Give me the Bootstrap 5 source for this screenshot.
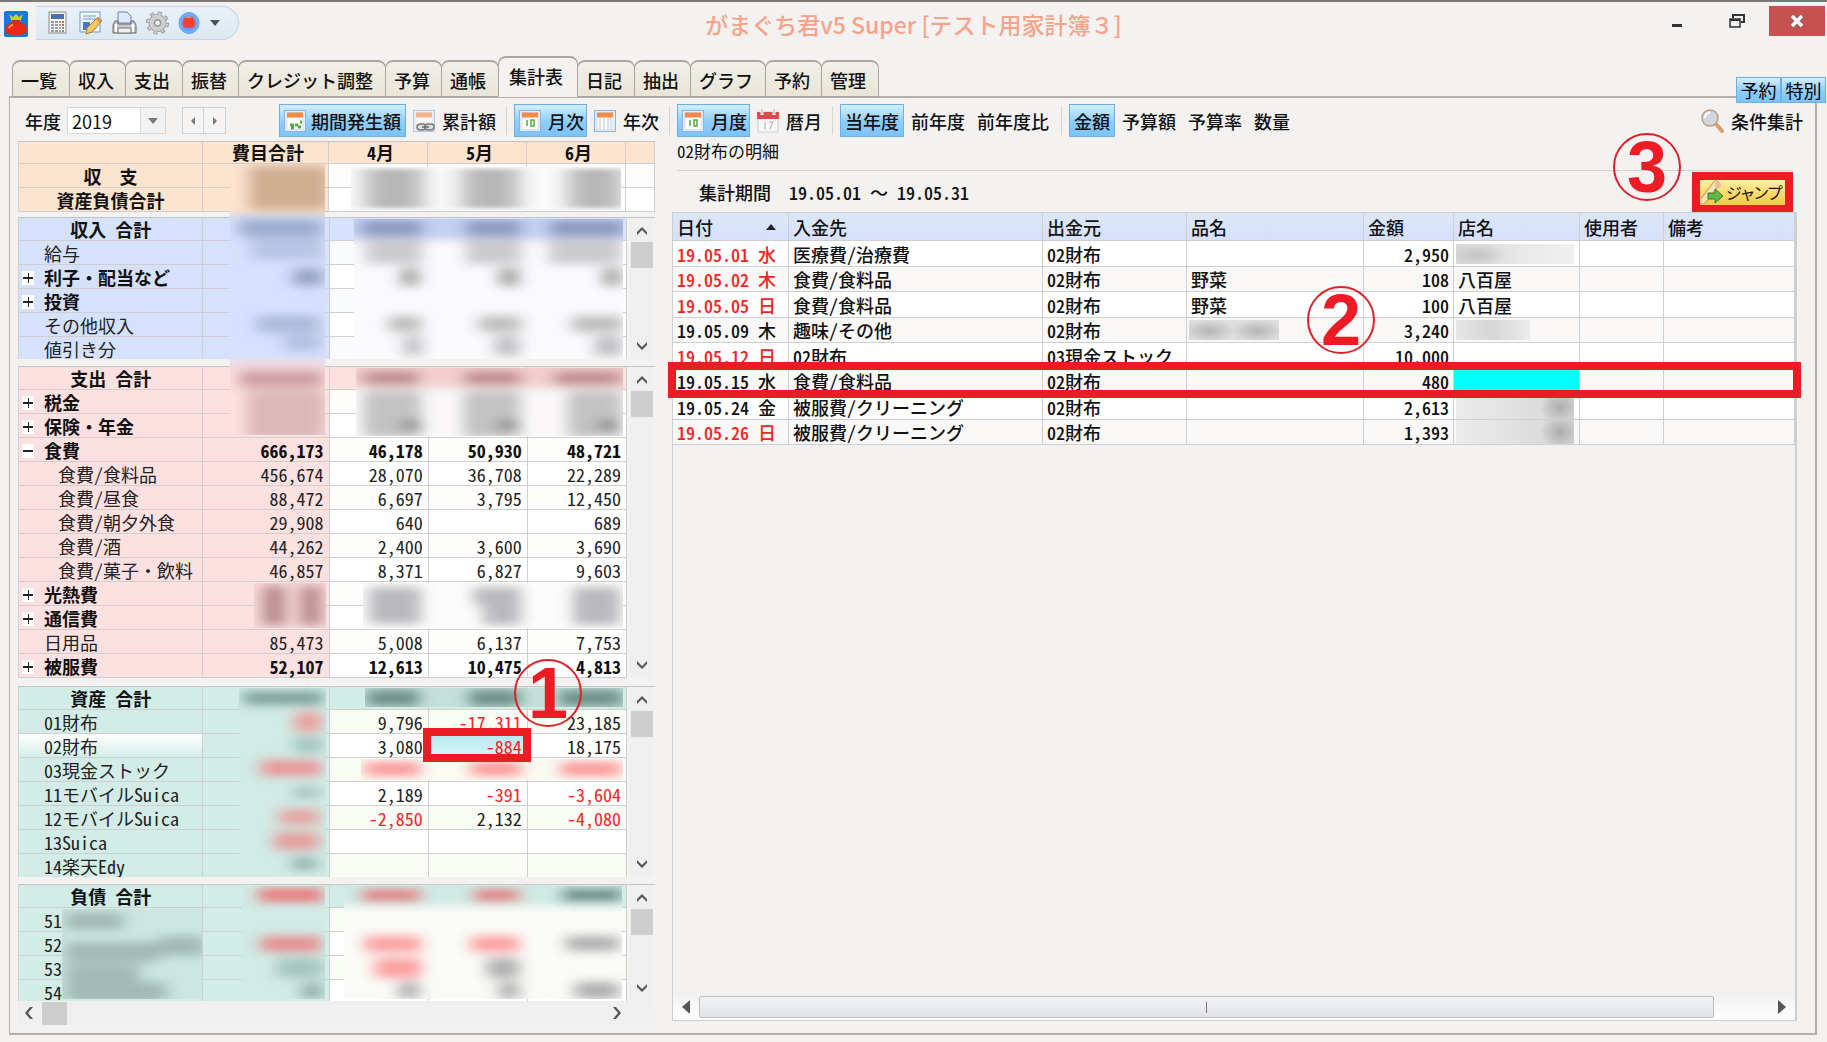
<!DOCTYPE html>
<html lang="ja">
<head>
<meta charset="utf-8">
<meta name="viewport" content="width=device-width, initial-scale=1">
<title>がまぐち君v5 Super</title>
<link rel="stylesheet" href="https://cdn.jsdelivr.net/npm/bootstrap@5.3.0/dist/css/bootstrap.min.css">
<style>
body{font-family:"Noto Sans CJK JP",sans-serif;font-size:18px;line-height:24px;color:#111;background:#f3f2f1;font-feature-settings:"hwid" 1}
.app{border-top:2px solid #7c7878}
/* title bar */
.titlebar{display:grid;grid-template-columns:1fr auto 1fr;height:54px}
.titlebar h1{font-size:23px;line-height:44px;color:#f7a389;margin:0;font-weight:500;font-feature-settings:normal;white-space:pre}
.quick{height:34px;background:linear-gradient(#eaf1f8,#dce8f2);border:1px solid #c3d4e6;border-left:0;border-radius:0 17px 17px 0;padding:0 18px 0 10px;gap:8px}
.plain{border:0;background:none;padding:0;line-height:0}
.winbtn{width:56px;height:30px}
.winclose{background:#c75050;margin-right:2px}
/* tabs */
.maintabs{height:41px;padding-left:12px;margin-bottom:-1px;border:0;position:relative;z-index:1}
.maintabs .nav-link{height:37px;padding:0 12px 0 8px;line-height:36px;color:#111;font-weight:500;border:2px solid #aaa6a1;border-radius:8px 8px 0 0;background:linear-gradient(#f1efe9,#e9e5d7);margin:0 -1px 0 0;border-width:2px 1px 1px}
.maintabs li:nth-child(even) .nav-link{padding-right:11px}
.maintabs .nav-link.active{height:41px;padding:0 14px 0 10px!important;background:#f3f2f1;border-color:#aaa6a1;border-bottom-color:#f3f2f1;color:#111}
.sheet{border:2px solid #b1afad;border-width:2px 2px 2px 1px;margin:0 10px 7px 9px;padding:6px 18px 8px 8px}
.overtabs{position:absolute;right:1px;top:75px;z-index:2}
.overtabs button,.tool.on{background:linear-gradient(#d3effe,#8ccdfb 55%,#7cc2fb);border:1px solid #6fb0e4}
.overtabs button{width:45px;height:26px;padding:0;line-height:24px}
/* tool row */
.tools{height:33px;gap:2px;margin-left:7px;margin-right:-9px}
.tool{height:33px;border:1px solid transparent;background:none;padding:0 4px;display:flex;align-items:center;gap:5px;font-weight:500;white-space:nowrap;color:#111}
.tool.ic{gap:7px;padding-right:2px}
.vsep{width:1px;height:29px;background:#d6d5d3;margin:0 5px}
.yearbox{width:99px;height:27px;position:relative;margin:0 14px 0 4px}
.yearbox select{width:100%;height:27px;appearance:none;border:1px solid #d8d8d8;background:#fff;padding:0 4px;line-height:24px;border-radius:0;color:#111}
.yearbox span{position:absolute;right:1px;top:1px;width:25px;height:25px;background:#f2f2f2;border-left:1px solid #d8d8d8;pointer-events:none;line-height:0;padding:10px 7px}
.stepper{margin-right:51px}
.stepper button{width:22px;height:27px;border:1px solid #d0d0d0;background:#f5f4f3;padding:0;line-height:0}
.stepper button+button{border-left:0}
/* left sheets */
.ledger{flex:0 0 636px;position:relative;margin-top:4px}
.block{display:flex;overflow:hidden;border-top:1px solid #c4c4c4;border-left:1px solid #d0d0d0}
.grid{border-collapse:separate;border-spacing:0;table-layout:fixed;width:608px;flex:none}
.grid th,.grid td{height:24px;line-height:22px;padding:0 5px 0 0;border-right:1px solid #cfcfcf;border-bottom:1px solid #cfcfcf;white-space:nowrap;text-align:right;font-weight:400;background:#fff;color:#222}
.grid tr:first-child>*{height:23px}
.grid tr:nth-child(even) td{background:var(--band)}
.grid tr>th,.grid tr>td:nth-child(2),.grid tr:first-child>*{background:var(--hue)!important}
.grid th[scope=row]{text-align:left;padding-left:25px}
.grid th.kid{padding-left:39px}
.grid th.fold{padding-left:3px}
.grid th.sum{text-align:center;padding-left:0;padding-right:0;white-space:pre}
.grid .strong>*{font-weight:700;color:#111}
.grid th.picked{background:linear-gradient(#fff,#d3eee8)!important}
.grid td.here{background:linear-gradient(#b4e8ef,#d8f5f7)!important}
.grid .neg,.book .hol{color:#f5231f}
.fold button{width:12px;height:14px;border:0;padding:0;margin-right:10px;line-height:0;background:linear-gradient(#222,#222) 50% 50%/10px 2px no-repeat,linear-gradient(#222,#222) 50% 50%/1px 10px no-repeat,#fff;vertical-align:0}
.fold button.open{background:linear-gradient(#222,#222) 50% 50%/10px 2px no-repeat,#fff}
.orange{--hue:#fde4cf;--band:#fefdfb;height:71px;margin-bottom:5px}
.orange .grid{width:636px}
.orange .grid tr:first-child>*{height:22px;line-height:21px;padding-left:5px;padding-right:0}
.blue{--hue:#d6e1fd;--band:#fafbff;height:142px;margin-bottom:7px}
.pink{--hue:#fde0e0;--band:#fffdfc;height:312px;margin-bottom:8px}
.green{--hue:#d2ede7;--band:#f8fcf5}
.assets{height:191px;margin-bottom:7px}
.debts{flex:1 1 115px;min-height:115px;height:0}
.vbar{width:23px;margin-left:3px;background:#f0efef;flex:none;display:flex;flex-direction:column;align-items:center}
.vbar svg{margin:8px 0 6px}
.vbar i{width:22px;height:26px;background:#cdcdcd}
.vbar svg:last-child{margin-top:auto;margin-bottom:8px}
.hbar{height:24px;background:#f0efef;padding:0 34px 0 7px;display:flex;align-items:center}
.hbar i{width:25px;height:23px;background:#cdcdcd;margin-left:8px}
.smudges{position:absolute;left:0;top:0;pointer-events:none}
/* right pane */
.detail{flex:1 1 0;min-width:0;margin-left:17px;margin-bottom:4px;position:relative}
.detail h2{font-size:17px;line-height:18px;margin:5px 0 10px 5px;font-weight:400}
.period{height:42px;border-top:1px solid #d3d2d1;margin:0 4px 0 5px;padding:1px 0 0 22px;font-weight:500;white-space:pre}
.wide{font-feature-settings:normal}
.jump{height:25px;width:85px;border:0;padding:0 0 0 1px;background:linear-gradient(#fbf0a4,#fbd765 60%,#fcc650);font-size:16px;font-feature-settings:"palt" 1;line-height:25px;white-space:nowrap;gap:2px;box-shadow:0 0 0 8px #eb1c24;margin-right:8px;color:#111}
.bookwrap{border:1px solid #d0cfcf;border-right-width:2px;position:relative}
.book{border-collapse:separate;border-spacing:0;table-layout:fixed;width:100%;font-weight:500}
.book th,.book td{height:25px;line-height:24px;padding:0 4px 0 4px;border-right:1px solid #cfcfcf;border-bottom:1px solid #cfcfcf;white-space:pre;background:#fff;font-weight:500;color:#111}
.book tr:nth-child(odd) td{height:26px}
.book tr:nth-child(even) td{background:#f9f8f7}
.book thead th{height:28px;background:linear-gradient(#dbe7f7,#d7e0fb)}
.book .amt{text-align:right}
.book td.pick{background:#0ff!important}
.book td.redact{padding:0 2px}
.redact i{display:block;height:20px;width:118px;background:radial-gradient(ellipse 30px 12px at 22px 11px,#c4c4c4,transparent),linear-gradient(90deg,#d8d8d8,#e9e9e9 60%,#f0f0f0)}
.redact i.half{width:74px;background:linear-gradient(90deg,#e6e6e6,#d6d6d6 50%,#ececec)}
.redact i.ware{width:90px;background:radial-gradient(ellipse 26px 12px at 20px 11px,#b5b5b5,transparent),radial-gradient(ellipse 26px 12px at 68px 11px,#b5b5b5,transparent),#dedede}
.redact i.late{height:24px;background:radial-gradient(ellipse 20px 18px at 104px 12px,#adadad,transparent),linear-gradient(90deg,#ebebeb,#d6d6d6)}
.slider{height:27px;background:linear-gradient(#f0f0f0,#fff);padding:0 9px;gap:9px}
.slider b{flex:0 1 1015px;height:22px;border:1px solid #b9bdbf;border-radius:2px;background:linear-gradient(#f1f3f3,#e3e4ea)}
.slider b::after{content:"";display:block;width:1px;height:11px;margin:5px auto;background:#777}
/* callouts */
.frame{position:absolute;border:8px solid #eb1c24;pointer-events:none;z-index:3}
.ring{position:absolute;width:68px;height:68px;border:2px solid #dc2128;border-radius:50%;color:#ed1c24;font:700 72px/64px "Liberation Sans",sans-serif;text-align:center;z-index:4;pointer-events:none}
.frame-cell{left:405px;top:587px;width:108px;height:34px}
.ring-one{left:496px;top:518px}
.frame-row{left:-5px;right:-6px;top:149px;height:36px}
.ring-two{right:420px;top:73px}
.ring-three{right:116px;top:-4px}
</style>
<script src="https://cdn.jsdelivr.net/npm/bootstrap@5.3.0/dist/js/bootstrap.bundle.min.js"></script>
</head>
<body>
<svg width="0" height="0" class="position-absolute" aria-hidden="true"><defs>
<symbol id="up" viewBox="0 0 14 10"><path d="M2 9V6l5-5 5 5v3L7 4z" fill="#555"/></symbol>
<symbol id="down" viewBox="0 0 14 10"><path d="M2 1v3l5 5 5-5V1L7 6z" fill="#555"/></symbol>
<symbol id="cal" viewBox="0 0 22 22"><rect x=".5" y=".5" width="21" height="21" fill="#e4eefa" stroke="#8fb2da"/><rect x="3" y="2.500" width="16" height="17" fill="#fff" stroke="#c5d4e6" stroke-width=".6"/><rect x="3" y="2.500" width="16" height="5" fill="#f58a48"/></symbol>
</defs></svg>
<div class="app d-flex flex-column min-vh-100 position-relative">
<header class="titlebar">
  <div class="d-flex align-items-start">
    <svg class="mx-1" style="margin-top:9px" width="24" height="26" viewBox="0 0 24 26"><rect width="24" height="26" rx="2" fill="#1679e0"/><path d="M5 3l4 3 3-3 3 3 4-3-3 8H8z" fill="#c9d32b"/><path d="M8 9h8l-1 2c5 1 8 4 8 8 0 3-3 5-11 5S1 22 1 19c0-4 3-7 8-8z" fill="#e82a12"/><path d="M5 17c1-2 2-3 4-3" stroke="#ff8d6c" stroke-width="2" fill="none"/><path d="M8 10h8" stroke="#a32" stroke-width="1.500"/></svg>
    <div class="quick d-flex align-items-center ms-1 mt-1">
      <button class="plain" aria-label="電卓"><svg width="24" height="24" viewBox="0 0 24 24"><rect x="3" y="1" width="17" height="21" fill="#f4f4f2" stroke="#8b8c8c"/><rect x="5" y="3" width="13" height="5" fill="#4c70b4"/><path d="M5 11h3m1 0h3m1 0h2M5 14h3m1 0h3m1 0h2M5 17h3m1 0h3m1 0h2M5 20h3m1 0h3m1 0h2" stroke="#9a9da3" stroke-width="2"/><path d="M16 11h2m-2 3h2" stroke="#d6604a" stroke-width="2"/><path d="M16 17h2m-2 3h2" stroke="#888" stroke-width="2"/></svg></button>
      <button class="plain" aria-label="メモ"><svg width="26" height="24" viewBox="0 0 26 24"><rect x="2" y="1" width="20" height="20" fill="#f2f7fd" stroke="#6e9bd1"/><path d="M5 5h13M5 8h13" stroke="#96b9e0" stroke-width="1.500"/><path d="M5 11h7v8H5z" fill="#467db9"/><path d="M20 6l4 4-10 11-6 2 1-6z" fill="#f8c763" stroke="#a97d36"/><path d="M20 6l4 4-2 2-4-4z" fill="#d9925e"/></svg></button>
      <button class="plain" aria-label="印刷"><svg width="25" height="24" viewBox="0 0 25 24"><path d="M6 12V1h9l4 4v7z" fill="#dceafd" stroke="#6584b4"/><path d="M3 10h3v3h13v-3h3l2 4v8H1v-8z" fill="#c9c9c9" stroke="#686868"/><path d="M4 13v8m17-8v8" stroke="#fff" stroke-width="2"/><path d="M6 17h13v5H6z" fill="#f0f0f0" stroke="#777"/></svg></button>
      <button class="plain" aria-label="設定"><svg width="25" height="24" viewBox="0 0 24 24"><g fill="none" stroke="#8e8e8e"><circle cx="12" cy="12" r="9.500" stroke-width="4" stroke-dasharray="3.700 3.760"/><circle cx="12" cy="12" r="6" stroke-width="6"/><circle cx="12" cy="12" r="6" stroke="#cfcfcf" stroke-width="4.500"/><circle cx="12" cy="12" r="9.500" stroke="#cfcfcf" stroke-width="2.500" stroke-dasharray="2.500 4.960" stroke-dashoffset="-.6"/></g><circle cx="12" cy="12" r="3" fill="#eef2f5" stroke="#888"/></svg></button>
      <button class="plain" aria-label="がまぐち"><svg width="24" height="24" viewBox="0 0 24 24"><defs><radialGradient id="ball"><stop offset=".5" stop-color="#5da6f8"/><stop offset="1" stop-color="#78b8fb"/></radialGradient></defs><ellipse cx="11" cy="12" rx="10" ry="10.500" fill="url(#ball)" stroke="#5aa0f0"/><ellipse cx="11" cy="12" rx="8" ry="8" fill="#7997ef"/><path d="M8 6h6c4 3 4 10 0 11H8C3 16 4 9 8 6z" fill="#f4402f"/><path d="M8 7l3-2 3 2z" fill="#ee9a33"/></svg></button>
      <button class="plain" aria-label="その他"><svg width="10" height="7"><path d="M0 0h10L5 6z" fill="#49525f"/></svg></button>
    </div>
  </div>
  <h1>がまぐち君v5 Super [テスト用家計簿３]</h1>
  <div class="d-flex justify-content-end align-items-start pt-1">
    <button class="plain winbtn" aria-label="最小化"><svg width="12" height="20"><path d="M1 13h10v3H1z" fill="#333"/></svg></button>
    <button class="plain winbtn mx-1" aria-label="元に戻す"><svg width="16" height="16" fill="none" stroke="#333"><path d="M4 5V2h11v7h-3" stroke-width="2"/><path d="M1 6h10v8H1z" stroke-width="1.500"/><path d="M1 7h10" stroke-width="2"/></svg></button>
    <button class="plain winbtn winclose" aria-label="閉じる"><svg width="16" height="14"><path d="M3 2l10 10M13 2L3 12" stroke="#8d6f72" stroke-width="5.500"/><path d="M3 2l10 10M13 2L3 12" stroke="#fff" stroke-width="3.200"/></svg></button>
  </div>
</header>
<ul class="nav nav-tabs maintabs flex-nowrap align-items-end">
  <li class="nav-item"><a class="nav-link" href="#">一覧</a></li><li class="nav-item"><a class="nav-link" href="#">収入</a></li><li class="nav-item"><a class="nav-link" href="#">支出</a></li><li class="nav-item"><a class="nav-link" href="#">振替</a></li><li class="nav-item"><a class="nav-link" href="#">クレジット調整</a></li><li class="nav-item"><a class="nav-link" href="#">予算</a></li><li class="nav-item"><a class="nav-link" href="#">通帳</a></li><li class="nav-item"><a class="nav-link active" aria-current="page" href="#">集計表</a></li><li class="nav-item"><a class="nav-link" href="#">日記</a></li><li class="nav-item"><a class="nav-link" href="#">抽出</a></li><li class="nav-item"><a class="nav-link" href="#">グラフ</a></li><li class="nav-item"><a class="nav-link" href="#">予約</a></li><li class="nav-item"><a class="nav-link" href="#">管理</a></li>
</ul>
<div class="overtabs d-flex"><button>予約</button><button>特別</button></div>
<main class="sheet flex-grow-1 d-flex flex-column">
  <div class="tools d-flex align-items-center">
    <label for="year" class="fw-medium">年度</label>
    <div class="yearbox"><select id="year"><option>2019</option></select><span><svg width="10" height="6"><path d="M0 0h10L5 6z" fill="#777"/></svg></span></div>
    <div class="stepper d-flex"><button aria-label="前年"><svg width="6" height="8"><path d="M5 0v8L1 4z" fill="#777"/></svg></button><button aria-label="翌年"><svg width="6" height="8"><path d="M1 0v8l4-4z" fill="#777"/></svg></button></div>
    <button class="tool on"><svg width="22" height="22"><use href="#cal"/><path d="M6 15h4m1 0h3m2-3h2M7 18h3m4-1h3" stroke="#53a552" stroke-width="3"/></svg>期間発生額</button>
    <button class="tool ic"><svg width="22" height="22" viewBox="0 0 22 22"><g opacity=".6"><use href="#cal"/></g><rect x="4" y="14" width="9" height="6" rx="3" fill="#ddd" stroke="#777" stroke-width="1.500"/><rect x="12" y="14" width="9" height="6" rx="3" fill="#ddd" stroke="#777" stroke-width="1.500"/><path d="M9 17h7" stroke="#666" stroke-width="1.500"/></svg>累計額</button>
    <span class="vsep"></span>
    <button class="tool on ic"><svg width="22" height="22"><use href="#cal"/><path d="M8 10v6M12 10h3v6h-3z" stroke="#58a83f" stroke-width="1.500" fill="none"/></svg>月次</button>
    <button class="tool ic"><svg width="22" height="22"><use href="#cal"/><path d="M6 8v11m4-11v11m4-11v11m3-11v11" stroke="#a9c3e2"/></svg>年次</button>
    <span class="vsep"></span>
    <button class="tool on ic"><svg width="22" height="22"><use href="#cal"/><path d="M8 10v6M12 10h3v6h-3z" stroke="#58a83f" stroke-width="1.500" fill="none"/></svg>月度</button>
    <button class="tool ic"><svg width="22" height="24" viewBox="0 0 22 24"><rect x="1" y="3" width="20" height="20" rx="1" fill="#f7f7f7" stroke="#ccc"/><path d="M0 3h22v7H0z" fill="#dc4b4b"/><path d="M5 0v6m12-6v6" stroke="#fff" stroke-width="3"/><path d="M5 0v5m12-5v5" stroke="#999"/><path d="M8 13v7m4-7h4l-3 7" fill="none" stroke="#aaa"/></svg>暦月</button>
    <span class="vsep"></span>
    <button class="tool on">当年度</button><button class="tool">前年度</button><button class="tool">前年度比</button>
    <span class="vsep"></span>
    <button class="tool on">金額</button><button class="tool">予算額</button><button class="tool">予算率</button><button class="tool">数量</button>
    <button class="tool ic ms-auto"><svg width="24" height="24" viewBox="0 0 24 24"><path d="M16 15l6 7" stroke="#d4a273" stroke-width="4" stroke-linecap="round"/><circle cx="10" cy="9" r="8" fill="#cfd6de" stroke="#bf9c80" stroke-width="1.500"/><path d="M5 9c0-3 2-5 5-5" stroke="#fff" stroke-width="2" fill="none"/></svg>条件集計</button>
  </div>
  <div class="d-flex flex-grow-1">
    <section class="ledger d-flex flex-column">
      <div class="block orange"><table class="grid"><colgroup><col style="width:184px"><col style="width:126px"><col style="width:99px"><col style="width:99px"><col style="width:99px"><col></colgroup>
        <tr class="strong"><th></th><th class="text-center">費目合計</th><th class="text-center">4月</th><th class="text-center">5月</th><th class="text-center">6月</th><th></th></tr>
        <tr class="strong"><th scope="row" class="sum">収  支</th><td></td><td></td><td></td><td></td><td></td></tr>
        <tr class="strong"><th scope="row" class="sum">資産負債合計</th><td></td><td></td><td></td><td></td><td></td></tr></table></div>
      <div class="block blue"><table class="grid"><colgroup><col style="width:184px"><col style="width:126px"><col style="width:99px"><col style="width:99px"><col style="width:99px"></colgroup>
        <tr class="strong"><th scope="row" class="sum">収入 合計</th><td></td><td></td><td></td><td></td></tr>
        <tr><th scope="row">給与</th><td></td><td></td><td></td><td></td></tr>
        <tr class="strong"><th scope="row" class="fold"><button aria-label="展開"></button>利子・配当など</th><td></td><td></td><td></td><td></td></tr>
        <tr class="strong"><th scope="row" class="fold"><button aria-label="展開"></button>投資</th><td></td><td></td><td></td><td></td></tr>
        <tr><th scope="row">その他収入</th><td></td><td></td><td></td><td></td></tr>
        <tr><th scope="row">値引き分</th><td></td><td></td><td></td><td></td></tr></table>
        <div class="vbar"><svg width="14" height="10"><use href="#up"/></svg><i></i><svg width="14" height="10"><use href="#down"/></svg></div></div>
      <div class="block pink"><table class="grid"><colgroup><col style="width:184px"><col style="width:126px"><col style="width:99px"><col style="width:99px"><col style="width:99px"></colgroup>
        <tr class="strong"><th scope="row" class="sum">支出 合計</th><td></td><td></td><td></td><td></td></tr>
        <tr class="strong"><th scope="row" class="fold"><button aria-label="展開"></button>税金</th><td></td><td></td><td></td><td></td></tr>
        <tr class="strong"><th scope="row" class="fold"><button aria-label="展開"></button>保険・年金</th><td></td><td></td><td></td><td></td></tr>
        <tr class="strong"><th scope="row" class="fold"><button class="open" aria-label="折りたたむ"></button>食費</th><td>666,173</td><td>46,178</td><td>50,930</td><td>48,721</td></tr>
        <tr><th scope="row" class="kid">食費/食料品</th><td>456,674</td><td>28,070</td><td>36,708</td><td>22,289</td></tr>
        <tr><th scope="row" class="kid">食費/昼食</th><td>88,472</td><td>6,697</td><td>3,795</td><td>12,450</td></tr>
        <tr><th scope="row" class="kid">食費/朝夕外食</th><td>29,908</td><td>640</td><td></td><td>689</td></tr>
        <tr><th scope="row" class="kid">食費/酒</th><td>44,262</td><td>2,400</td><td>3,600</td><td>3,690</td></tr>
        <tr><th scope="row" class="kid">食費/菓子・飲料</th><td>46,857</td><td>8,371</td><td>6,827</td><td>9,603</td></tr>
        <tr class="strong"><th scope="row" class="fold"><button aria-label="展開"></button>光熱費</th><td></td><td></td><td></td><td></td></tr>
        <tr class="strong"><th scope="row" class="fold"><button aria-label="展開"></button>通信費</th><td></td><td></td><td></td><td></td></tr>
        <tr><th scope="row">日用品</th><td>85,473</td><td>5,008</td><td>6,137</td><td>7,753</td></tr>
        <tr class="strong"><th scope="row" class="fold"><button aria-label="展開"></button>被服費</th><td>52,107</td><td>12,613</td><td>10,475</td><td>4,813</td></tr></table>
        <div class="vbar"><svg width="14" height="10"><use href="#up"/></svg><i></i><svg width="14" height="10"><use href="#down"/></svg></div></div>
      <div class="block green assets"><table class="grid"><colgroup><col style="width:184px"><col style="width:126px"><col style="width:99px"><col style="width:99px"><col style="width:99px"></colgroup>
        <tr class="strong"><th scope="row" class="sum">資産 合計</th><td></td><td></td><td></td><td></td></tr>
        <tr><th scope="row">01財布</th><td></td><td>9,796</td><td class="neg">-17,311</td><td>23,185</td></tr>
        <tr><th scope="row" class="picked">02財布</th><td></td><td>3,080</td><td class="neg here">-884</td><td>18,175</td></tr>
        <tr><th scope="row">03現金ストック</th><td></td><td></td><td></td><td></td></tr>
        <tr><th scope="row">11モバイルSuica</th><td></td><td>2,189</td><td class="neg">-391</td><td class="neg">-3,604</td></tr>
        <tr><th scope="row">12モバイルSuica</th><td></td><td class="neg">-2,850</td><td>2,132</td><td class="neg">-4,080</td></tr>
        <tr><th scope="row">13Suica</th><td></td><td></td><td></td><td></td></tr>
        <tr><th scope="row">14楽天Edy</th><td></td><td></td><td></td><td></td></tr></table>
        <div class="vbar"><svg width="14" height="10"><use href="#up"/></svg><i></i><svg width="14" height="10"><use href="#down"/></svg></div></div>
      <div class="block green debts"><table class="grid align-self-start"><colgroup><col style="width:184px"><col style="width:126px"><col style="width:99px"><col style="width:99px"><col style="width:99px"></colgroup>
        <tr class="strong"><th scope="row" class="sum">負債 合計</th><td></td><td></td><td></td><td></td></tr>
        <tr><th scope="row">51</th><td></td><td></td><td></td><td></td></tr>
        <tr><th scope="row">52</th><td></td><td></td><td></td><td></td></tr>
        <tr><th scope="row">53</th><td></td><td></td><td></td><td></td></tr>
        <tr><th scope="row">54</th><td></td><td></td><td></td><td></td></tr></table>
        <div class="vbar"><svg width="14" height="10"><use href="#up"/></svg><i></i><svg width="14" height="10"><use href="#down"/></svg></div></div>
      <div class="hbar"><svg width="9" height="14"><path d="M8 1H5L0 7l5 6h3L3 7z" fill="#555"/></svg><i></i><svg class="ms-auto" width="9" height="14"><path d="M1 1h3l5 6-5 6H1l5-6z" fill="#555"/></svg></div>

      <!-- blurred private figures -->
      <svg class="smudges" width="636" height="882" viewBox="19 143 636 882" aria-hidden="true">
        <defs><filter id="bl" x="-30%" y="-60%" width="160%" height="220%"><feGaussianBlur stdDeviation="8 5"/></filter><filter id="bs" x="-30%" y="-60%" width="160%" height="220%"><feGaussianBlur stdDeviation="11 2"/></filter>
        <linearGradient id="colbase" x1="0" y1="166" x2="0" y2="437" gradientUnits="userSpaceOnUse"><stop offset="0" stop-color="#fde4cf"/><stop offset=".165" stop-color="#fbe3d0"/><stop offset=".2" stop-color="#d8dff2"/><stop offset=".25" stop-color="#d6e1fd"/><stop offset=".7" stop-color="#d6e1fd"/><stop offset=".74" stop-color="#f0dde4"/><stop offset=".78" stop-color="#fde0e0"/></linearGradient></defs>
        <svg x="231" y="166" width="95" height="271" viewBox="231 166 95 271"><path d="M231 166h95v271h-95z" fill="url(#colbase)"/><g filter="url(#bl)"><path d="M250 168h80v44h-80z" fill="#cfae92"/><path d="M240 221h84v18h-84z" fill="#9dadd0"/><path d="M252 240h72v22h-72z" fill="#b8c5e4"/><path d="M294 270h30v18h-30z" fill="#98a4c4"/><path d="M258 317h62v18h-62z" fill="#adbadb"/><path d="M285 337h37v16h-37z" fill="#b4c0e0"/><path d="M240 372h84v18h-84z" fill="#cfa1a6"/><path d="M248 393h78v48h-78z" fill="#dab7b9"/></g></svg>
        <svg x="352" y="169" width="270" height="43" viewBox="352 169 270 43"><path d="M352 169h270v43H352z" fill="#fbfafa"/><g filter="url(#bs)"><path d="M366 171h58v39h-58zM463 171h57v39h-57zM569 171h54v39h-54z" fill="#b8b8b8"/></g></svg>
        <svg x="355" y="221" width="269" height="140" viewBox="355 221 269 140"><path d="M355 221h269v140H355z" fill="#fafafd"/><g filter="url(#bl)"><path d="M340 204h302v38H340z" fill="#c3d0f2"/><path d="M363 222h60v16h-60zM467 222h55v16h-55zM551 222h74v16h-74z" fill="#8a97bd"/><path d="M367 242h56v24h-56zM467 242h55v24h-55zM550 242h72v24h-72z" fill="#cbcbce"/><path d="M402 270h18v18h-18zM500 270h20v18h-20zM604 270h18v18h-18z" fill="#a6a6a6"/><path d="M390 318h32v16h-32zM480 318h42v16h-42zM573 318h50v16h-50z" fill="#bebebe"/><path d="M405 338h18v20h-18zM496 338h24v20h-24zM596 338h27v20h-27z" fill="#bfbfc2"/></g></svg>
        <svg x="357" y="370" width="267" height="68" viewBox="357 370 267 68"><path d="M357 370h267v68H357z" fill="#faf8f8"/><g filter="url(#bl)"><path d="M340 353h302v37H340z" fill="#f3cfd0"/><path d="M365 373h55v14h-55zM465 373h57v14h-57zM555 373h67v14h-67z" fill="#bd8b8f"/><path d="M365 393h57v47h-57zM465 393h56v47h-56zM569 393h54v47h-54z" fill="#c2c2c2"/><path d="M403 422h18v10h-18zM500 422h18v10h-18zM600 422h18v10h-18z" fill="#848484"/></g></svg>
        <svg x="255" y="585" width="72" height="45" viewBox="255 585 72 45"><path d="M255 585h72v45h-72z" fill="#f8dadb"/><path filter="url(#bl)" d="M264 588h22v39h-22zM302 588h20v39h-20z" fill="#b5888d"/></svg>
        <svg x="364" y="585" width="260" height="45" viewBox="364 585 260 45"><path d="M364 585h260v45H364z" fill="#fcfcfc"/><path filter="url(#bl)" d="M370 589h52v37h-52zM474 589h48v18h-48zM484 607h38v20h-38zM574 589h47v38h-47z" fill="#b9b9bd"/></svg>
        <svg x="240" y="690" width="87" height="188" viewBox="240 690 87 188"><path d="M240 690h87v188h-87z" fill="#d1ebe5"/><g filter="url(#bl)"><path d="M244 693h80v14h-80z" fill="#7fa39c"/><path d="M296 714h26v20h-26z" fill="#ea9d9c"/><path d="M295 739h28v16h-28z" fill="#a3c4bd"/><path d="M262 762h60v16h-60z" fill="#e99699"/><path d="M295 788h25v13h-25z" fill="#a8c5bf"/><path d="M280 811h40v16h-40z" fill="#e4a5a3"/><path d="M275 834h45v18h-45z" fill="#e49f9d"/><path d="M293 859h25v13h-25z" fill="#94b4ad"/></g></svg>
        <svg x="366" y="690" width="258" height="19" viewBox="366 690 258 19"><path d="M366 690h258v19H366z" fill="#c5e0da"/><path filter="url(#bl)" d="M368 692h52v16h-52zM470 692h51v16h-51zM560 692h63v16h-63z" fill="#6d8f89"/></svg>
        <svg x="362" y="761" width="262" height="21" viewBox="362 761 262 21"><path d="M362 761h262v21H362z" fill="#fbfaf5"/><path filter="url(#bl)" d="M366 764h55v14h-55zM472 764h50v14h-50zM562 764h60v14h-60z" fill="#fa9896"/></svg>
        <svg x="243" y="888" width="83" height="113" viewBox="243 888 83 113"><path d="M243 888h83v113h-83z" fill="#d1ebe5"/><g filter="url(#bl)"><path d="M260 890h64v14h-64z" fill="#e87a7d"/><path d="M262 938h60v16h-60z" fill="#e79092"/><path d="M278 960h46v20h-46z" fill="#a5c5be"/><path d="M302 985h22v16h-22z" fill="#96b1ab"/></g></svg>
        <svg x="345" y="888" width="278" height="113" viewBox="345 888 278 113"><path d="M345 888h278v113H345z" fill="#fafbf7"/><g filter="url(#bl)"><path d="M325 870h320v38H325z" fill="#cfeae4"/><path d="M362 890h60v14h-60zM474 890h47v14h-47z" fill="#e08486"/><path d="M563 890h60v14h-60z" fill="#6b8c86"/><path d="M366 938h56v16h-56zM472 938h48v16h-48zM376 960h46v20h-46z" fill="#fba0a0"/><path d="M567 938h53v15h-53zM488 960h32v20h-32zM400 984h20v17h-20zM500 984h20v17h-20zM576 984h44v17h-44z" fill="#b0b0b0"/></g></svg>
        <svg x="63" y="911" width="140" height="90" viewBox="63 911 140 90"><path d="M63 911h140v90H63z" fill="#cce6e0"/><g filter="url(#bl)"><path d="M66 914h58v18H66zM160 938h45v20h-45zM66 944h95v20H66zM66 966h75v18H66zM66 984h102v20H66z" fill="#a2bab5"/></g></svg>
      </svg>
      <div class="frame frame-cell"></div><div class="ring ring-one">1</div>
    </section>

    <section class="detail d-flex flex-column">
      <h2>02財布の明細</h2>
      <div class="period d-flex align-items-center">集計期間  19.05.01 <span class="wide">～</span> 19.05.31<button class="jump d-flex align-items-center ms-auto"><svg width="23" height="24" viewBox="0 0 23 24"><path d="M2 21L15 4" stroke="#c9a05a" stroke-width="7" stroke-linecap="round"/><path d="M2 21L15 4" stroke="#f6e4b8" stroke-width="5" stroke-linecap="round"/><circle cx="17" cy="5" r="3" fill="#f3b897"/><path d="M7 13h7V9l8 7-8 7v-4H7z" fill="#64b54a" stroke="#397b2b"/></svg>ジャンプ</button></div>
      <div class="bookwrap flex-grow-1 d-flex flex-column">
        <table class="book"><colgroup><col style="width:116px"><col style="width:254px"><col style="width:144px"><col style="width:177px"><col style="width:90px"><col style="width:126px"><col style="width:84px"><col></colgroup>
          <thead><tr><th><span class="d-flex align-items-center justify-content-between pe-2">日付<svg width="10" height="8"><path d="M0 7h10L5 1z" fill="#222"/></svg></span></th><th>入金先</th><th>出金元</th><th>品名</th><th>金額</th><th>店名</th><th>使用者</th><th>備考</th></tr></thead>
          <tbody>
          <tr><td class="hol">19.05.01 水</td><td>医療費/治療費</td><td>02財布</td><td></td><td class="amt">2,950</td><td class="redact"><i></i></td><td></td><td></td></tr>
          <tr><td class="hol">19.05.02 木</td><td>食費/食料品</td><td>02財布</td><td>野菜</td><td class="amt">108</td><td>八百屋</td><td></td><td></td></tr>
          <tr><td class="hol">19.05.05 日</td><td>食費/食料品</td><td>02財布</td><td>野菜</td><td class="amt">100</td><td>八百屋</td><td></td><td></td></tr>
          <tr><td>19.05.09 木</td><td>趣味/その他</td><td>02財布</td><td class="redact"><i class="ware"></i></td><td class="amt">3,240</td><td class="redact"><i class="half"></i></td><td></td><td></td></tr>
          <tr><td class="hol">19.05.12 日</td><td>02財布</td><td>03現金ストック</td><td></td><td class="amt">10,000</td><td></td><td></td><td></td></tr>
          <tr><td>19.05.15 水</td><td>食費/食料品</td><td>02財布</td><td></td><td class="amt">480</td><td class="pick"></td><td></td><td></td></tr>
          <tr><td>19.05.24 金</td><td>被服費/クリーニング</td><td>02財布</td><td></td><td class="amt">2,613</td><td class="redact"><i class="late"></i></td><td></td><td></td></tr>
          <tr><td class="hol">19.05.26 日</td><td>被服費/クリーニング</td><td>02財布</td><td></td><td class="amt">1,393</td><td class="redact"><i class="late"></i></td><td></td><td></td></tr>
          </tbody></table>
        <div class="slider d-flex align-items-center mt-auto"><svg width="8" height="14"><path d="M8 0v14L0 7z" fill="#555"/></svg><b></b><svg class="ms-auto" width="8" height="14"><path d="M0 0v14l8-7z" fill="#555"/></svg></div>
        <div class="frame frame-row"></div><div class="ring ring-two">2</div>
      </div>
      <div class="ring ring-three">3</div>
    </section>
  </div>
</main>
</div>
</body>
</html>
